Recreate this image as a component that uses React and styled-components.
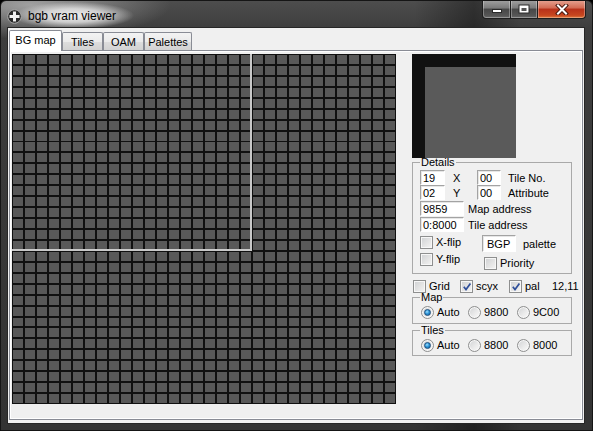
import React from 'react'
import styled, { createGlobalStyle } from 'styled-components'

const GlobalStyle = createGlobalStyle`
  html, body {
    margin: 0;
    padding: 0;
    background: #000;
  }
  body {
    font-family: "Liberation Sans", Arial, sans-serif;
    font-size: 11px;
    color: #000;
  }
`

function App() {
    return (
        <>
            <GlobalStyle />
            <Window>
                <TitleBar>
                    <AppIcon />
                    <Title>bgb vram viewer</Title>
                    <Caption>
                        <CapBtn $w={29} $first>
                            <svg width="12" height="10" viewBox="0 0 12 10">
                                <rect x="1.5" y="5.5" width="9" height="3" fill="#fff" stroke="#2a2a2a" />
                            </svg>
                        </CapBtn>
                        <CapBtn $w={28}>
                            <svg width="12" height="10" viewBox="0 0 12 10">
                                <rect x="0.5" y="0.5" width="11" height="9" fill="#2a2a2a" />
                                <rect x="1.5" y="1.5" width="9" height="7" fill="#fff" />
                                <rect x="3.5" y="4" width="5" height="3" fill="#555" />
                            </svg>
                        </CapBtn>
                        <CapBtn $w={49} $close>
                            <svg width="14" height="11" viewBox="0 0 14 11">
                                <path d="M3 1.5 L11 9.5 M11 1.5 L3 9.5" stroke="#4a1a10" strokeWidth="4" strokeLinecap="square" />
                                <path d="M3 1.5 L11 9.5 M11 1.5 L3 9.5" stroke="#fff" strokeWidth="2" strokeLinecap="square" />
                            </svg>
                        </CapBtn>
                    </Caption>
                </TitleBar>
                <Client>
                    <TabStrip>
                        <Tab $w={53} $active>BG map</Tab>
                        <Tab $w={41}>Tiles</Tab>
                        <Tab $w={41}>OAM</Tab>
                        <Tab $w={48}>Palettes</Tab>
                    </TabStrip>
                    <Panel>
                        <MapGrid>
                            <Viewport />
                        </MapGrid>
                        <Side>
                            <Preview>
                                <PreviewTile />
                            </Preview>
                            <Group $mt={-1} $pb={3}>
                                <legend>Details</legend>
                                <Row $mt={2}>
                                    <Field $w={25}>19</Field>
                                    <Label $w={32} $pl={8}>X</Label>
                                    <Field $w={24}>00</Field>
                                    <Label $pl={7}>Tile No.</Label>
                                </Row>
                                <Row>
                                    <Field $w={25}>02</Field>
                                    <Label $w={32} $pl={8}>Y</Label>
                                    <Field $w={24}>00</Field>
                                    <Label $pl={7}>Attribute</Label>
                                </Row>
                                <Row $mt={1}>
                                    <Field $w={44}>9859</Field>
                                    <Label $pl={4}>Map address</Label>
                                </Row>
                                <Row $mt={1}>
                                    <Field $w={44}>0:8000</Field>
                                    <Label $pl={4}>Tile address</Label>
                                </Row>
                                <FlagArea>
                                    <FlagCol $w={62}>
                                        <Check $mt={1} label="X-flip" />
                                        <Check $mt={4} label="Y-flip" />
                                    </FlagCol>
                                    <FlagCol>
                                        <Row>
                                            <Field $w={34} $h={17} $pl={4}>BGP</Field>
                                            <Label $pl={7}>palette</Label>
                                        </Row>
                                        <Check $mt={5} $ml={2} label="Priority" />
                                    </FlagCol>
                                </FlagArea>
                            </Group>
                            <OptionRow>
                                <Check $w={47} label="Grid" />
                                <Check $w={49} label="scyx" checked />
                                <Check $w={43} label="pal" checked />
                                <span>12,11</span>
                            </OptionRow>
                            <Group $mt={-1} $pb={4}>
                                <legend>Map</legend>
                                <Row $mt={3}>
                                    <Radio $w={46} label="Auto" checked />
                                    <Radio $w={48} label="9800" />
                                    <Radio label="9C00" />
                                </Row>
                            </Group>
                            <Group $mt={1} $pb={3}>
                                <legend>Tiles</legend>
                                <Row $mt={3}>
                                    <Radio $w={46} label="Auto" checked />
                                    <Radio $w={48} label="8800" />
                                    <Radio label="8000" />
                                </Row>
                            </Group>
                        </Side>
                    </Panel>
                </Client>
            </Window>
        </>
    )
}

function AppIcon() {
    return (
        <IconWrap>
            <svg width="15" height="15" viewBox="0 0 15 15">
                <circle cx="7.5" cy="7.5" r="6.8" fill="#2b2b2b" stroke="#a8a8a8" strokeWidth="1" />
                <rect x="6" y="2.5" width="3" height="10" fill="#f2f2f2" />
                <rect x="2.5" y="6" width="10" height="3" fill="#f2f2f2" />
            </svg>
        </IconWrap>
    )
}

function Check({ label, checked, $w, $mt, $ml }) {
    return (
        <Item $w={$w} $mt={$mt} $ml={$ml}>
            <Box>
                {checked && (
                    <svg width="10" height="10" viewBox="0 0 10 10">
                        <path d="M1.8 4.8 L4 7.6 L8.4 1.6" fill="none" stroke="#2f4f9a" strokeWidth="1.7" />
                    </svg>
                )}
            </Box>
            <span>{label}</span>
        </Item>
    )
}

function Radio({ label, checked, $w }) {
    return (
        <Item $w={$w} $ml={1}>
            <RadioCircle>{checked && <Dot />}</RadioCircle>
            <span>{label}</span>
        </Item>
    )
}

export default App

const Window = styled.div`
    width: 593px;
    height: 431px;
    box-sizing: border-box;
    display: flex;
    flex-direction: column;
    border: 1px solid #151515;
    border-radius: 6px 6px 0 0;
    overflow: hidden;
    background:
        radial-gradient(ellipse 140px 34px at 30px 4px, rgba(190, 190, 190, 0.75), rgba(190, 190, 190, 0) 100%),
        linear-gradient(90deg, rgba(0, 0, 0, 0) 70%, rgba(0, 0, 0, 0.35) 80%, rgba(0, 0, 0, 0) 88%),
        linear-gradient(180deg, #4d4d4d 0, #3e3e3e 27px, #333 100%);
`

const TitleBar = styled.div`
    height: 27px;
    display: flex;
    align-items: flex-start;
    flex-shrink: 0;
`

const IconWrap = styled.div`
    margin: 8px 0 0 6px;
    width: 15px;
    height: 15px;
    position: relative;
    z-index: 1;
    svg { display: block; }
`

const Title = styled.div`
    margin: 1px 0 0 -9px;
    padding: 7px 18px 6px 15px;
    font-family: "Liberation Sans", Arial, sans-serif;
    font-size: 12px;
    line-height: 14px;
    color: #000;
    background: radial-gradient(ellipse closest-side, rgba(245, 245, 245, 0.95) 0%, rgba(230, 230, 230, 0.8) 50%, rgba(200, 200, 200, 0) 100%);
`

const Caption = styled.div`
    margin: -1px 6px 0 auto;
    display: flex;
`

const CapBtn = styled.div`
    width: ${({ $w }) => $w}px;
    height: 19px;
    box-sizing: border-box;
    display: flex;
    align-items: center;
    justify-content: center;
    margin-left: ${({ $first }) => ($first ? '0' : '-1px')};
    border: 1px solid #1e1e1e;
    border-top: none;
    border-radius: ${({ $first, $close }) => ($first ? '0 0 0 4px' : $close ? '0 0 4px 0' : '0')};
    background: ${({ $close }) => ($close
        ? 'linear-gradient(180deg, #e7a594 0%, #d26a52 45%, #b8311a 50%, #c7461f 85%, #e07a3c 100%)'
        : 'linear-gradient(180deg, #a2a2a2 0%, #7a7a7a 45%, #474747 50%, #555 85%, #6a6a6a 100%)')};
    box-shadow: inset 0 0 0 1px rgba(255, 255, 255, 0.3);
    svg { display: block; }
`

const Client = styled.div`
    flex: 1;
    margin: 0 8px 7px 7px;
    padding: 2px 1px 3px 1px;
    display: flex;
    flex-direction: column;
    background: #f0f0f0;
    box-shadow: 0 0 0 1px #262626;
`

const TabStrip = styled.div`
    height: 20px;
    display: flex;
    align-items: flex-end;
    flex-shrink: 0;
`

const Tab = styled.div`
    width: ${({ $w }) => $w}px;
    height: ${({ $active }) => ($active ? 21 : 18)}px;
    margin-bottom: ${({ $active }) => ($active ? '-1px' : '0')};
    position: relative;
    z-index: ${({ $active }) => ($active ? 1 : 0)};
    box-sizing: border-box;
    display: flex;
    align-items: center;
    justify-content: center;
    padding-bottom: ${({ $active }) => ($active ? 2 : 0)}px;
    border: 1px solid #898c95;
    border-bottom: none;
    border-radius: 2px 2px 0 0;
    background: ${({ $active }) => ($active
        ? '#fff'
        : 'linear-gradient(180deg, #f3f3f3 0%, #ebebeb 50%, #dedede 50%, #d2d2d2 100%)')};
    font-size: 11px;
    white-space: nowrap;
`

const Panel = styled.div`
    flex: 1;
    box-sizing: border-box;
    display: flex;
    align-items: flex-start;
    padding: 3px 0 0 2px;
    border: 1px solid #898c95;
    background: #f0f0f0;
    box-shadow: inset 0 0 0 1px #fff;
`

const MapGrid = styled.div`
    position: relative;
    width: 384px;
    height: 350px;
    flex-shrink: 0;
    background-color: #595959;
    background-image:
        repeating-linear-gradient(90deg, #111 0 1px, transparent 1px 11px, #111 11px 12px),
        repeating-linear-gradient(180deg, #111 0 1px, transparent 1px 9.9375px, #111 9.9375px 10.9375px);
`

const Viewport = styled.div`
    position: absolute;
    left: 0;
    top: 0;
    width: 240px;
    height: 197px;
    box-sizing: border-box;
    border-right: 2px solid #c9c9c9;
    border-bottom: 2px solid #c9c9c9;
`

const Side = styled.div`
    margin-left: 16px;
    width: 160px;
    display: flex;
    flex-direction: column;
`

const Preview = styled.div`
    width: 104px;
    height: 104px;
    display: flex;
    justify-content: flex-end;
    align-items: flex-end;
    background: #111;
`

const PreviewTile = styled.div`
    width: 91px;
    height: 91px;
    background: #5a5a5a;
`

const Group = styled.fieldset`
    margin: ${({ $mt }) => $mt || 0}px 0 0 0;
    padding: 0 0 ${({ $pb }) => $pb || 0}px 7px;
    width: 160px;
    box-sizing: border-box;
    border: 1px solid #a9a9a9;
    min-width: 0;
    legend {
        padding: 0 1px;
        font-size: 11px;
        line-height: 11px;
    }
`

const Row = styled.div`
    display: flex;
    align-items: center;
    margin-top: ${({ $mt }) => $mt || 0}px;
`

const Field = styled.div`
    width: ${({ $w }) => $w}px;
    height: ${({ $h }) => $h || 15}px;
    box-sizing: border-box;
    padding-left: ${({ $pl }) => $pl || 2}px;
    display: flex;
    align-items: center;
    flex-shrink: 0;
    background: #fff;
    border: 1px solid;
    border-color: #a3a3a3 #fff #fff #a3a3a3;
    box-shadow: inset 1px 1px 0 #e6e6e6;
    font-size: 11px;
    white-space: nowrap;
`

const Label = styled.span`
    width: ${({ $w }) => ($w ? `${$w}px` : 'auto')};
    padding-left: ${({ $pl }) => $pl || 0}px;
    box-sizing: border-box;
    flex-shrink: 0;
    white-space: nowrap;
`

const FlagArea = styled.div`
    display: flex;
    margin-top: 3px;
`

const FlagCol = styled.div`
    width: ${({ $w }) => ($w ? `${$w}px` : 'auto')};
    display: flex;
    flex-direction: column;
`

const Item = styled.label`
    display: flex;
    align-items: center;
    gap: 3px;
    width: ${({ $w }) => ($w ? `${$w}px` : 'auto')};
    margin-top: ${({ $mt }) => $mt || 0}px;
    margin-left: ${({ $ml }) => $ml || 0}px;
    flex-shrink: 0;
    white-space: nowrap;
    line-height: 13px;
`

const Box = styled.span`
    width: 13px;
    height: 13px;
    box-sizing: border-box;
    display: flex;
    align-items: center;
    justify-content: center;
    flex-shrink: 0;
    border: 1px solid #8e8f8f;
    background: linear-gradient(135deg, #cfd1d3 0%, #e6e6e6 60%, #f5f5f5 100%);
    box-shadow: inset 0 0 0 1px #f7f7f7;
    svg { display: block; }
`

const OptionRow = styled.div`
    display: flex;
    align-items: center;
    margin: 6px 0 0 1px;
    height: 13px;
    line-height: 13px;
`

const RadioCircle = styled.span`
    width: 13px;
    height: 13px;
    box-sizing: border-box;
    border-radius: 50%;
    display: flex;
    align-items: center;
    justify-content: center;
    flex-shrink: 0;
    border: 1px solid #8e8f8f;
    background: linear-gradient(135deg, #d0d2d4 0%, #ececec 60%, #fafafa 100%);
    box-shadow: inset 0 0 0 1px #f7f7f7;
`

const Dot = styled.span`
    width: 7px;
    height: 7px;
    border-radius: 50%;
    box-sizing: border-box;
    border: 1px solid #1d4f7e;
    background: radial-gradient(circle at 40% 35%, #9fe0ff 0%, #2f96d8 45%, #0d5c9a 100%);
`
